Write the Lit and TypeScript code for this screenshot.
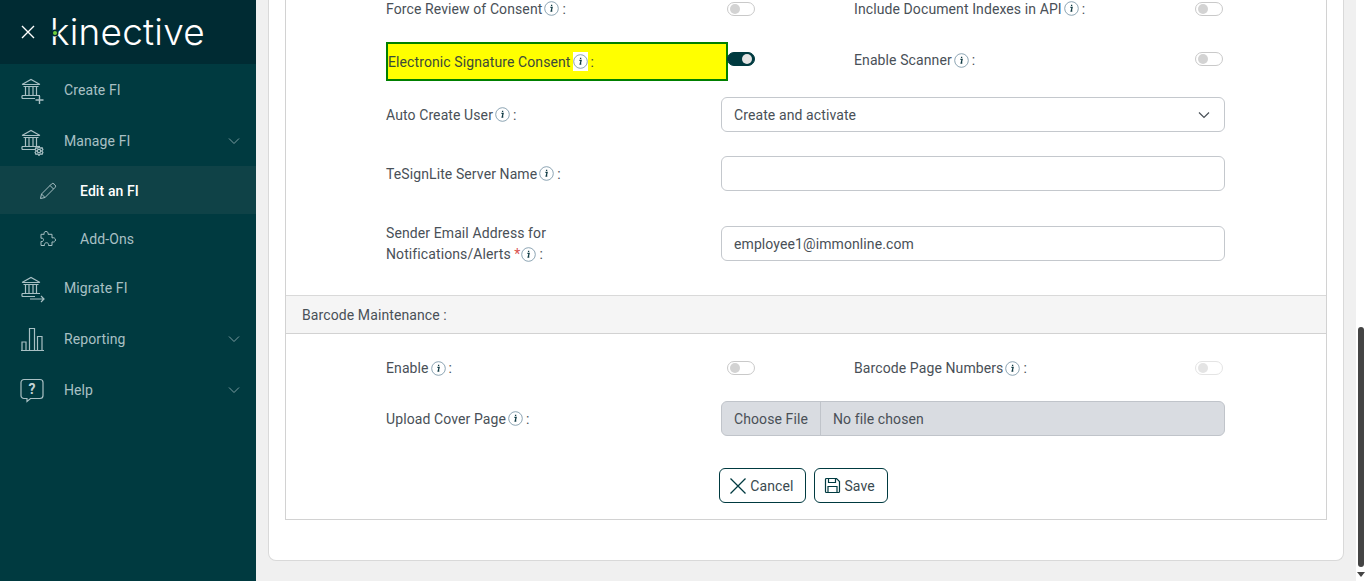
import { LitElement, html, css, svg } from "lit";
import { customElement } from "lit/decorators.js";

const bank = svg`<path d="M2 9.500 11 4.500 20 9.500M2.500 9.500h17M3.500 11.500h15M5.500 12v8M9 12v8M13 12v8M16.500 12v8M2 20.500h18M2 23.500h13M2 20.500v3"/>`;
const icons: Record<string, unknown> = {
  create: svg`${bank}<path d="M19.500 21v8M15.500 25h8" stroke-width="1.400"/>`,
  manage: svg`${bank}<circle cx="19" cy="25" r="1.700"/><path d="M19 20.500l1.100 1.700 2-.4.800 1.800-1.300 1.400 1.300 1.400-.8 1.800-2-.4-1.100 1.700-1.100-1.700-2 .4-.8-1.800 1.300-1.400-1.300-1.400.8-1.800 2 .4z"/>`,
  migrate: svg`${bank}<path d="M10 26h14M21 23l3 3-3 3"/>`,
  report: svg`<path d="M1 26.500h23M2 26v-8h4v8M9.500 26V4.500h5V26M17.500 26V12.500h4.500V26"/>`,
  help: svg`<path d="M4 4.500h16a3 3 0 0 1 3 3v13a3 3 0 0 1-3 3h-9.500l-3.500 3v-3H4a3 3 0 0 1-3-3v-13a3 3 0 0 1 3-3z"/><text class="q" x="12" y="19" text-anchor="middle">?</text>`,
};

const chevron = html`<svg class="chev" viewBox="0 0 12 8"><path d="M1 1.500l5 5 5-5"/></svg>`;
const info = html`<svg class="info" viewBox="0 0 15 15"><circle cx="7.500" cy="7.500" r="6.800"/><path class="i" d="M6.400 6.400h1.700l-.9 3.600h1.100M7.600 3.800v1.200"/></svg>`;

@customElement("app-root")
export class AppRoot extends LitElement {
  static styles = css`
    :host { display: flex; width: 1366px; height: 581px; overflow: hidden; font-family: Roboto, "Liberation Sans", sans-serif; font-size: 14px; letter-spacing: .1px; color: #495057; }
    * { box-sizing: border-box; }
    .side { width: 256px; flex: none; background: #003a40; color: #a9c0c4; }
    .brand { height: 64px; background: #002b33; display: flex; align-items: center; padding-left: 21px; gap: 15px; color: #fff; }
    .brand .x { width: 14px; height: 14px; fill: none; stroke: #fff; stroke-width: 1.400; }
    .logo { position: relative; font-family: Inter, sans-serif; font-weight: 300; font-size: 37px; line-height: 40px; letter-spacing: .2px; }
    .dot { position: absolute; left: 3px; top: 19px; width: 4px; height: 4px; border-radius: 50%; background: #6fd03e; box-shadow: 0 0 0 1.500px #002b33; }
    .item { height: 51px; display: flex; align-items: center; padding-left: 20px; padding-right: 16px; }
    .item svg.ic { width: 25px; height: 30px; fill: none; stroke: #a9c0c4; stroke-width: 1.200; margin-right: 19px; flex: none; }
    .q { fill: #c4d4d6; stroke: none; font-family: Roboto, sans-serif; font-size: 14px; font-weight: 700; }
    .item .chev { margin-left: auto; }
    .chev { width: 12px; height: 8px; fill: none; stroke: #7c9ca1; stroke-width: 1; }
    .sub { height: 48px; display: flex; align-items: center; padding-left: 39px; padding-top: 1px; }
    .sub svg { width: 18px; height: 18px; fill: none; stroke: #a9c0c4; stroke-width: 1; margin-right: 23px; }
    .sub.on { background: #0f4247; color: #fff; font-weight: 500; }
    .main { flex: 1; display: flex; background: #f0f0f0; min-width: 0; }
    .col { flex: 1; display: flex; flex-direction: column; justify-content: flex-end; padding: 0 12px 20px 12px; min-width: 0; }
    .card { background: #fff; border: 1px solid #d9d9d9; border-top: 0; border-radius: 0 0 8px 8px; padding: 0 16px 40px; }
    .panel { border: 1px solid #d2d2d2; border-top: 0; }
    .rows { padding: 0 100px; height: 295px; display: flex; flex-direction: column; }
    .r2 { display: grid; grid-template-columns: 341px 28px 99px 341px 28px; align-items: center; }
    .label { display: flex; align-items: center; gap: 2px; white-space: nowrap; }
    .label .colon { margin-left: 1px; }
    .info { width: 15px; height: 15px; fill: none; stroke: #6e8da0; stroke-width: .8; flex: none; }
    .info .i { stroke: #123c46; stroke-width: 1.300; }
    .toggle { width: 28px; height: 14px; border: 1px solid #c9c9c9; border-radius: 7px; background: #fff; display: flex; align-items: center; padding: 0 2px; }
    .toggle::before { content: ""; width: 10px; height: 10px; border-radius: 50%; background: #d3d3d3; }
    .toggle.on { background: #003a40; border-color: #003a40; justify-content: flex-end; }
    .toggle.on::before { background: #e4e4e4; }
    .toggle.dim { border-color: #e4e4e4; }
    .toggle.dim::before { background: #e4e4e4; }
    .r1 { height: 17px; }
    .rsig { margin-top: 25px; height: 39px; }
    .hl { height: 39px; width: 342px; background: #ff0; border: 2px solid #008000; margin-right: -1px; color: #3b4a3a; }
    .hl .info { background: #fff; height: 19px; padding: 2px 0; }
    .rsig .toggle { margin-top: -6px; position: relative; }
    .rsig .label.plain { margin-top: -3px; }
    .form { display: grid; grid-template-columns: 335px 504px; align-items: center; }
    .f1 { margin-top: 16px; height: 35px; }
    .f2 { margin-top: 24px; height: 35px; }
    .f3 { margin-top: 31px; height: 42px; align-items: start; }
    .f3 .label { display: block; line-height: 21px; white-space: normal; width: 200px; margin-top: 1px; }
    .f3 .info { vertical-align: -3px; margin: 0 3px 0 1px; }
    .f3 .req { color: #d9534f; }
    .f3 .ctl { margin-top: 4px; }
    .ctl { height: 35px; border: 1px solid #c4c8cd; border-radius: 6px; background: #fff; padding: 0 12px; display: flex; align-items: center; justify-content: space-between; color: #495057; }
    .ctl svg { width: 12px; height: 8px; fill: none; stroke: #495057; stroke-width: 1.200; margin-right: 2px; }
    .head { height: 39px; background: #f5f5f5; border-top: 1px solid #d9d9d9; border-bottom: 1px solid #d2d2d2; display: flex; align-items: center; padding-left: 16px; }
    .rows2 { padding: 0 100px 16px; }
    .r3 { height: 14px; margin-top: 26px; }
    .file { display: flex; height: 35px; background: #d9dce1; border: 1px solid #c0c4ca; border-radius: 6px; align-items: center; }
    .file span:first-child { padding: 0 12px; height: 100%; display: flex; align-items: center; border-right: 1px solid #c0c4ca; }
    .file span:last-child { padding-left: 12px; }
    .f4 { margin-top: 27px; height: 35px; }
    .btns { display: flex; justify-content: center; gap: 8px; margin-top: 32px; margin-left: -5px; }
    .btn { height: 35px; border: 1px solid #003a40; border-radius: 6px; background: #fff; display: flex; align-items: center; color: #3a4a50; padding: 0 12px 0 9px; gap: 3px; }
    .btn svg { fill: none; stroke: #003a40; }
    .track { width: 10px; flex: none; background: #fff; position: relative; display: flex; justify-content: center; }
    .thumb { position: absolute; top: 327px; width: 6px; height: 240px; border-radius: 3px; background: #444; }
    .arrow { position: absolute; bottom: 4px; width: 0; height: 0; border: 4px solid transparent; border-top: 5px solid #444; border-bottom: 0; }
  `;

  private navItem(label: string, icon: string, chev = false) {
    return html`<div class="item"><svg class="ic" viewBox="0 0 25 30">${icons[icon]}</svg><span>${label}</span>${chev ? chevron : ""}</div>`;
  }

  private lab(text: string) {
    return html`<div class="label plain"><span>${text}</span>${info}<span class="colon">:</span></div>`;
  }

  render() {
    return html`
      <aside class="side">
        <div class="brand">
          <svg class="x" viewBox="0 0 14 14"><path d="M1 1l12 12M13 1L1 13"/></svg>
          <div class="logo">kinective<span class="dot"></span></div>
        </div>
        ${this.navItem("Create FI", "create")}
        ${this.navItem("Manage FI", "manage", true)}
        <div class="sub on"><svg viewBox="0 0 18 18"><path d="M1.500 16.500l1-4.500L12.500 2a1.800 1.800 0 0 1 2.600 0l.9.900a1.800 1.800 0 0 1 0 2.600L6 15.500zM2.500 12L6 15.500M11 3.500L14.500 7"/></svg>Edit an FI</div>
        <div class="sub"><svg viewBox="0 0 18 18"><path d="M7 1.500c1.500 0 2.500 1 2 2.800h4v3.600c1.800-.6 3.500.3 3.500 2s-1.700 2.600-3.500 2v3.600H9.500c.5-1.800-.7-2.800-2-2.800s-2.500 1-2 2.800H2v-4c1.500.5 2.500-.5 2.500-1.800S3.500 7.800 2 8.300V4.300h3.200C4.600 2.600 5.500 1.500 7 1.500z"/></svg>Add-Ons</div>
        ${this.navItem("Migrate FI", "migrate")}
        ${this.navItem("Reporting", "report", true)}
        ${this.navItem("Help", "help", true)}
      </aside>
      <div class="main">
        <div class="col">
          <div class="card">
            <div class="panel">
              <div class="rows">
                <div class="r2 r1">
                  ${this.lab("Force Review of Consent")}<div class="toggle"></div><span></span>
                  ${this.lab("Include Document Indexes in API")}<div class="toggle"></div>
                </div>
                <div class="r2 rsig">
                  <div class="label hl"><span>Electronic Signature Consent</span>${info}<span class="colon">:</span></div><div class="toggle on"></div><span></span>
                  ${this.lab("Enable Scanner")}<div class="toggle"></div>
                </div>
                <div class="form f1">${this.lab("Auto Create User")}<div class="ctl">Create and activate<svg viewBox="0 0 12 8"><path d="M1 1.500l5 5 5-5"/></svg></div></div>
                <div class="form f2">${this.lab("TeSignLite Server Name")}<div class="ctl"></div></div>
                <div class="form f3"><div class="label">Sender Email Address for Notifications/Alerts <span class="req">*</span>${info}<span>:</span></div><div class="ctl">employee1@immonline.com</div></div>
              </div>
              <div class="head">Barcode Maintenance :</div>
              <div class="rows2">
                <div class="r2 r3">
                  ${this.lab("Enable")}<div class="toggle"></div><span></span>
                  ${this.lab("Barcode Page Numbers")}<div class="toggle dim"></div>
                </div>
                <div class="form f4">${this.lab("Upload Cover Page")}<div class="file"><span>Choose File</span><span>No file chosen</span></div></div>
                <div class="btns">
                  <div class="btn"><svg width="18" height="18" viewBox="0 0 18 18" stroke-width="1.300"><path d="M1.500 1.500l15 15M16.500 1.500l-15 15"/></svg>Cancel</div>
                  <div class="btn"><svg width="17" height="17" viewBox="0 0 17 17" stroke-width="1.200"><path d="M1.500 2.500a1 1 0 0 1 1-1h10l3 3v10a1 1 0 0 1-1 1h-12a1 1 0 0 1-1-1zM4.500 1.500v4h7v-4M4 15.500v-6h9v6"/></svg>Save</div>
                </div>
              </div>
            </div>
          </div>
        </div>
        <div class="track"><div class="thumb"></div><div class="arrow"></div></div>
      </div>
    `;
  }
}
